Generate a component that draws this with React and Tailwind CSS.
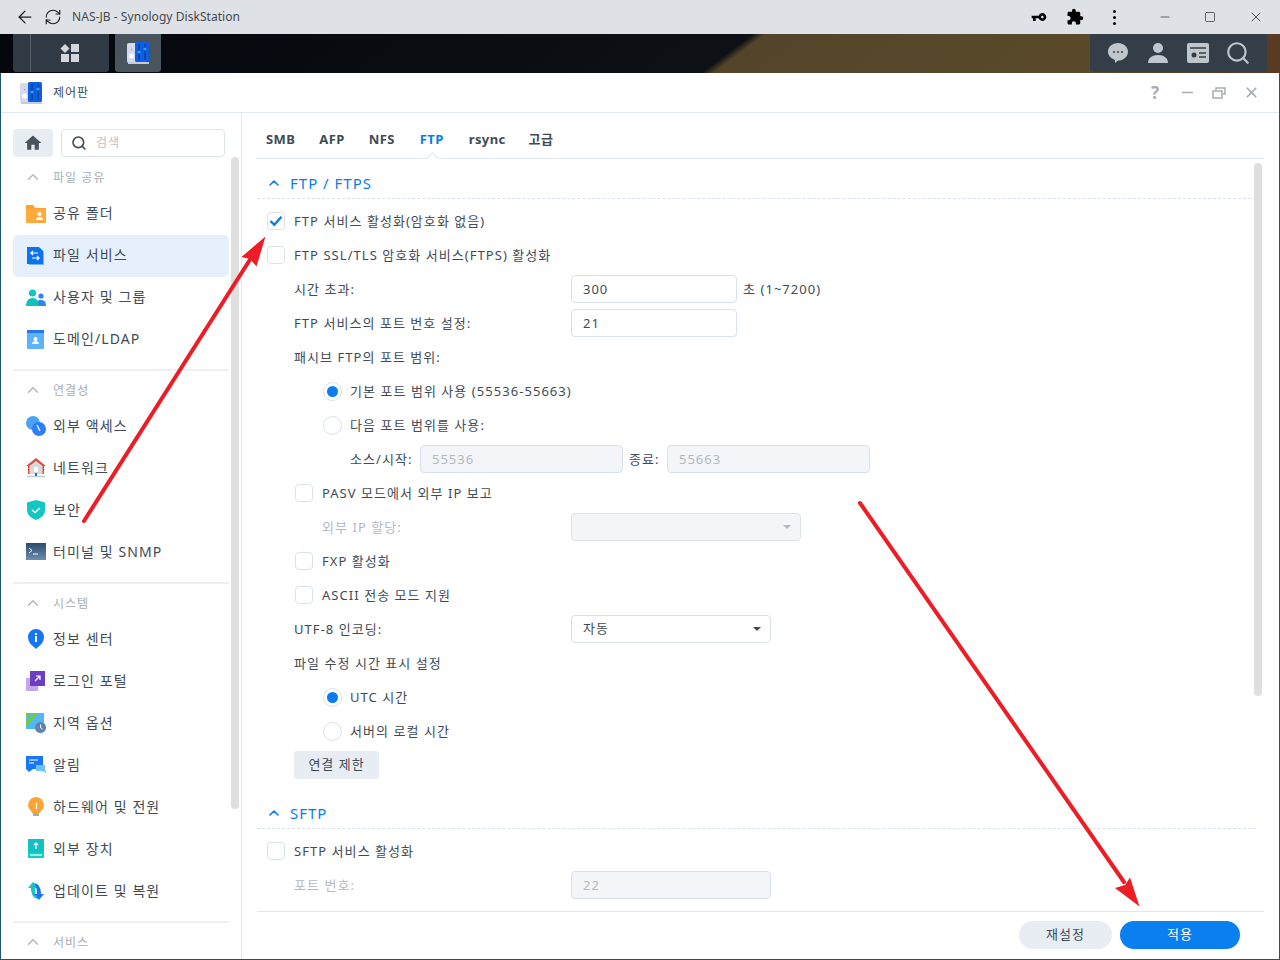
import { ArrowLeft, RefreshCw, ChevronUp, Search, Minus, Square, X } from "lucide-react";
import { MdVpnKey, MdExtension, MdHome } from "react-icons/md";

const font = { fontFamily: '"Noto Sans", "Noto Sans CJK KR", sans-serif' };

// --- small colored app icons ---
const ControlPanelIcon = ({ size = 24 }) => (
  <svg width={size} height={size} viewBox="0 0 24 24">
    <rect x="1" y="2" width="11" height="20" rx="2" fill="#d5d9ee" />
    <circle cx="5.5" cy="15" r="2.5" fill="#fff" />
    <rect x="5" y="8" width="1" height="1" fill="#8a93b8" />
    <rect x="9" y="1" width="14" height="20" rx="1.5" fill="#0b5fe0" />
    <path d="M13 3v16M19 3v16" stroke="#0b2f80" strokeWidth="1" />
    <circle cx="13" cy="11" r="1.6" fill="#3c9bff" />
    <circle cx="19" cy="8" r="1.6" fill="#3c9bff" />
    <rect x="2" y="21" width="21" height="2" fill="#c6cbdd" />
  </svg>
);

const icons = {
  folder: (
    <svg width="20" height="20" viewBox="0 0 20 20">
      <path d="M0 1h7l2 3h11v15H0z" fill="#ff9f2e" />
      <path d="M0 5h20v14H0z" fill="#ffab3d" />
      <circle cx="13.5" cy="10" r="2" fill="#fff" />
      <path d="M10 16c0-2 1.5-3 3.5-3s3.5 1 3.5 3z" fill="#fff" />
    </svg>
  ),
  file: (
    <svg width="20" height="20" viewBox="0 0 20 20">
      <path d="M3 2h11l4 4v13H3z" fill="#76b3fa" />
      <path d="M1 1h12l4 4v13H1z" fill="#0c72f0" />
      <path d="M12 7H5l2-2M5 7l2 2M6 12h7l-2-2M13 12l-2 2" stroke="#fff" strokeWidth="1.2" fill="none" />
    </svg>
  ),
  users: (
    <svg width="20" height="20" viewBox="0 0 20 20">
      <circle cx="6.5" cy="5" r="3.6" fill="#12c4c4" />
      <circle cx="15" cy="8" r="2.6" fill="#2f83f5" />
      <path d="M9 18c0-4 2.5-6 6-6s5 2 5 6z" fill="#2f83f5" />
      <path d="M0 18c0-5 2.5-8 6.5-8s6.5 3 6.5 8z" fill="#10c0bb" />
    </svg>
  ),
  domain: (
    <svg width="20" height="20" viewBox="0 0 20 20">
      <rect x="1" y="0" width="17" height="19" rx="1" fill="#5cb2fb" />
      <rect x="1" y="0" width="17" height="3" fill="#2477ee" />
      <circle cx="9.5" cy="9" r="2" fill="#fff" />
      <path d="M6 14c0-2 1.5-3 3.5-3s3.5 1 3.5 3z" fill="#fff" />
    </svg>
  ),
  external: (
    <svg width="20" height="20" viewBox="0 0 20 20">
      <circle cx="7" cy="7" r="7" fill="#4ba3f7" />
      <circle cx="13" cy="13" r="7" fill="#2d7ff5" />
      <path d="M11 9l3 6" stroke="#fff" strokeWidth="1.2" />
    </svg>
  ),
  network: (
    <svg width="20" height="20" viewBox="0 0 20 20">
      <path d="M10 0L0 8h2v8h16V8h2z" fill="#d94f4a" />
      <path d="M3.5 8L10 3l6.5 5v8h-13z" fill="#d9dadd" />
      <rect x="8" y="9" width="4" height="5" fill="#fff" />
      <path d="M1 18.500h18" stroke="#c0c8d4" strokeWidth="1.400" />
      <path d="M10 15v3" stroke="#1b6fe8" strokeWidth="2" />
    </svg>
  ),
  security: (
    <svg width="20" height="20" viewBox="0 0 20 20">
      <path d="M10 0l9 2.500V10c0 5-4 8-9 10-5-2-9-5-9-10V2.500z" fill="#10c7c3" />
      <path d="M6 10l3 2.500L14 8" stroke="#fff" strokeWidth="1.500" fill="none" />
    </svg>
  ),
  terminal: (
    <svg width="20" height="20" viewBox="0 0 20 20">
      <defs>
        <linearGradient id="term" x1="0" y1="0" x2="0" y2="1">
          <stop offset="0" stopColor="#2c4a6b" />
          <stop offset="1" stopColor="#6b8cb0" />
        </linearGradient>
      </defs>
      <rect x="0" y="1" width="20" height="17" fill="url(#term)" />
      <path d="M3 6l3 2.500L3 11M7 12h5" stroke="#fff" strokeWidth="1" fill="none" />
    </svg>
  ),
  info: (
    <svg width="20" height="20" viewBox="0 0 20 20">
      <path d="M10 20C7 17 2 14 2 8a8 8 0 0116 0c0 6-5 9-8 12z" fill="#1276f6" />
      <rect x="9" y="7" width="2" height="6" fill="#fff" />
      <rect x="9" y="4" width="2" height="2" fill="#fff" />
    </svg>
  ),
  login: (
    <svg width="20" height="20" viewBox="0 0 20 20">
      <rect x="0" y="7" width="12" height="13" fill="#c3a6ec" />
      <rect x="4" y="0" width="15" height="15" fill="#6d3ec4" />
      <path d="M9 10l5-5M10 5h4v4" stroke="#fff" strokeWidth="1.200" fill="none" />
    </svg>
  ),
  region: (
    <svg width="20" height="20" viewBox="0 0 20 20">
      <rect x="0" y="0" width="18" height="16" fill="#52b7f7" />
      <path d="M0 0h6L0 5zM0 8l9-8h3L0 14z" fill="#7ccb2e" />
      <circle cx="14.500" cy="14.500" r="5.500" fill="#5f83ad" />
      <path d="M14.500 11.500v3l2 1.500" stroke="#fff" strokeWidth="1" fill="none" />
    </svg>
  ),
  notify: (
    <svg width="20" height="20" viewBox="0 0 20 20">
      <path d="M0 1h17v13H7l-4 3-3-3z" fill="#1878f8" />
      <path d="M3 5h9M3 8h5" stroke="#fff" strokeWidth="1.200" />
      <path d="M10 10h9v6h1v2l-3-2h-7z" fill="#6ec0fb" />
    </svg>
  ),
  hardware: (
    <svg width="20" height="20" viewBox="0 0 20 20">
      <path d="M10 0a8 8 0 00-5 14l1 2h8l1-2a8 8 0 00-5-14z" fill="#fba333" />
      <rect x="7" y="16" width="6" height="3" fill="#a3abb5" />
      <path d="M9.500 7l1-.5V12" stroke="#fff" strokeWidth="1.200" fill="none" />
    </svg>
  ),
  device: (
    <svg width="20" height="20" viewBox="0 0 20 20">
      <rect x="2" y="0" width="16" height="13" fill="#14c0c4" />
      <rect x="2" y="13" width="16" height="6" fill="#0ecfc6" />
      <path d="M4 16h12" stroke="#fff" strokeWidth="1.200" />
      <path d="M10 10V4M8 6l2-2 2 2" stroke="#fff" strokeWidth="1.200" fill="none" />
    </svg>
  ),
  update: (
    <svg width="20" height="20" viewBox="0 0 20 20">
      <path d="M7 1L2 7h3c0 6 2 10 7 11-2-3-3-6-3-11h3z" fill="#14c4c9" />
      <path d="M13 19l5-6h-3c0-6-2-10-7-11 2 3 3 6 3 11H8z" fill="#1a78ee" />
    </svg>
  ),
};

// --- sidebar ---
const GroupTitle = ({ title }) => (
  <div className="flex h-[20px] items-center">
    <span className="flex w-[40px] justify-center">
      <ChevronUp className="h-[18px] w-[18px] text-[#b4b8bd]" strokeWidth={2} />
    </span>
    <span className="pt-[2px] text-[12px] leading-[18px] tracking-[1px] text-[#a8adb3]">{title}</span>
  </div>
);

const NavItem = ({ icon, label, active, lift }) => (
  <div className={`flex h-[42px] items-center rounded-[5px] pl-[13px] ${active ? "bg-[#e5f0fc]" : ""}`}>
    <span className="mr-[7px] flex h-[20px] w-[20px] items-center justify-center">{icons[icon]}</span>
    <span className={`text-[14px] leading-[18px] tracking-[1.100px] text-[#414b55] ${lift ? "pb-[2px]" : ""}`}>{label}</span>
  </div>
);

const Divider = () => <div className="h-[2px] bg-[#eef0f4]" />;

const Sidebar = () => (
  <aside className="relative flex w-[241px] shrink-0 flex-col overflow-hidden border-r border-[#e2e8ef] px-[12px] pt-[16px]">
    <div className="flex h-[28px] w-[212px] gap-[8px]">
      <div className="flex w-[40px] items-center justify-center rounded-[4px] bg-[#e8edf3]">
        <MdHome className="text-[20px] text-[#49535e]" />
      </div>
      <div className="flex w-[164px] items-center rounded-[4px] border border-[#dbe4ee] pl-[9px]">
        <Search className="h-[16px] w-[16px] text-[#414b55]" strokeWidth={2.400} />
        <span className="ml-[9px] text-[12px] leading-[18px] tracking-[1px] text-[#bcc1c7]">검색</span>
      </div>
    </div>
    <div className="mt-[10px] flex w-[216px] flex-col">
      <GroupTitle title="파일 공유" />
      <div className="mt-[6px]" />
      <NavItem icon="folder" label="공유 폴더" lift />
      <NavItem icon="file" label="파일 서비스" active lift />
      <NavItem icon="users" label="사용자 및 그룹" lift />
      <NavItem icon="domain" label="도메인/LDAP" lift />
      <div className="mt-[8px]" />
      <Divider />
      <div className="mt-[9px]" />
      <GroupTitle title="연결성" />
      <div className="mt-[5px]" />
      <NavItem icon="external" label="외부 액세스" />
      <NavItem icon="network" label="네트워크" />
      <NavItem icon="security" label="보안" />
      <NavItem icon="terminal" label="터미널 및 SNMP" />
      <div className="mt-[9px]" />
      <Divider />
      <div className="mt-[9px]" />
      <GroupTitle title="시스템" />
      <div className="mt-[5px]" />
      <NavItem icon="info" label="정보 센터" />
      <NavItem icon="login" label="로그인 포털" />
      <NavItem icon="region" label="지역 옵션" />
      <NavItem icon="notify" label="알림" />
      <NavItem icon="hardware" label="하드웨어 및 전원" />
      <NavItem icon="device" label="외부 장치" />
      <NavItem icon="update" label="업데이트 및 복원" />
      <div className="mt-[9px]" />
      <Divider />
      <div className="mt-[9px]" />
      <GroupTitle title="서비스" />
    </div>
    <div className="absolute left-[230px] top-[44px] h-[652px] w-[8px] rounded-[4px] bg-[#dfdfdf]" />
  </aside>
);

// --- form bits ---
const Check = ({ checked }) => (
  <span className="flex h-[18px] w-[18px] shrink-0 items-center justify-center rounded-[4px] border border-[#d9e2ec] bg-white">
    {checked && (
      <svg width="14" height="12" viewBox="0 0 14 12">
        <path d="M1.500 6l3.800 3.800L12.500 1.800" stroke="#0a7cf0" strokeWidth="2.400" fill="none" />
      </svg>
    )}
  </span>
);

const Radio = ({ checked }) => (
  <span className="flex h-[19px] w-[19px] shrink-0 items-center justify-center rounded-full border border-[#d9e2ec] bg-white">
    {checked && <span className="h-[11px] w-[11px] rounded-full bg-[#0a7cf0]" />}
  </span>
);

const Label = ({ children, muted }) => (
  <span className={`block whitespace-nowrap text-[13px] leading-[18px] tracking-[1.050px] ${muted ? "text-[#b4b9bf]" : "text-[#414b55]"}`}>{children}</span>
);

const Field = ({ value, disabled, width }) => (
  <div
    className={`flex h-[28px] items-center rounded-[4px] border border-[#d9e2ec] pl-[11px] pt-[1px] text-[13px] tracking-[1px] ${
      disabled ? "bg-[#f3f5f9] text-[#b4b9bf]" : "bg-white text-[#414b55]"
    }`}
    style={{ width }}
  >
    {value}
  </div>
);

const Dropdown = ({ value, disabled, width }) => (
  <div
    className={`flex h-[28px] items-center justify-between rounded-[4px] border border-[#d9e2ec] pl-[11px] pr-[9px] text-[13px] tracking-[1px] ${
      disabled ? "bg-[#f3f5f9]" : "bg-white text-[#414b55]"
    }`}
    style={{ width }}
  >
    <span>{value}</span>
    <span className={`h-0 w-0 border-x-[4px] border-t-[4px] border-x-transparent ${disabled ? "border-t-[#b4b9bf]" : "border-t-[#414b55]"}`} />
  </div>
);

const Row = ({ indent = 0, children }) => (
  <div className="flex h-[34px] items-center" style={{ paddingLeft: indent }}>
    {children}
  </div>
);

const CheckRow = ({ indent = 10, label, checked }) => (
  <Row indent={indent}>
    <Check checked={checked} />
    <span className="ml-[9px]">
      <Label>{label}</Label>
    </span>
  </Row>
);

const RadioRow = ({ label, checked }) => (
  <Row indent={66}>
    <Radio checked={checked} />
    <span className="ml-[8px]">
      <Label>{label}</Label>
    </span>
  </Row>
);

const FieldRow = ({ label, muted, children, labelWidth = 277, indent = 37 }) => (
  <Row indent={indent}>
    <span className="shrink-0" style={{ width: labelWidth }}>
      <Label muted={muted}>{label}</Label>
    </span>
    {children}
  </Row>
);

const SectionTitle = ({ title }) => (
  <div className="mr-[8px] flex h-[32px] items-center border-b border-dashed border-[#d9e2ec] pl-[9px]">
    <ChevronUp className="h-[16px] w-[16px] text-[#0a7cf0]" strokeWidth={2.400} />
    <span className="ml-[8px] text-[15px] leading-[18px] tracking-[1px] text-[#0a7cf0]">{title}</span>
  </div>
);

const Tabs = () => {
  const tabs = [
    { name: "SMB", gap: "mr-[24px]" },
    { name: "AFP", gap: "mr-[24px]" },
    { name: "NFS", gap: "mr-[25px]" },
    { name: "FTP", gap: "mr-[25px]" },
    { name: "rsync", gap: "mr-[23px]" },
    { name: "고급", gap: "" },
  ];
  return (
    <div className="relative flex h-[45px] items-center border-b border-[#dfe6ee] pl-[9px] pt-[5px]">
      {tabs.map((t) => (
        <span
          key={t.name}
          className={`text-[13px] font-bold leading-[18px] tracking-[0.4px] ${t.gap} ${t.name === "FTP" ? "text-[#0a7cf0]" : "text-[#414b55]"}`}
        >
          {t.name}
        </span>
      ))}
      <span className="absolute left-[171px] top-[40px] h-[9px] w-[9px] rotate-45 border-l border-t border-[#dfe6ee] bg-white" />
    </div>
  );
};

const FormPane = () => (
  <main className="relative flex min-w-0 flex-1 flex-col px-[15px] pt-[1px]">
    <div className="h-[797px] overflow-hidden">
      <Tabs />
      <div className="mt-[8px]" />
      <SectionTitle title="FTP / FTPS" />
      <div className="mt-[5px]" />
      <CheckRow label="FTP 서비스 활성화(암호화 없음)" checked />
      <CheckRow label="FTP SSL/TLS 암호화 서비스(FTPS) 활성화" />
      <FieldRow label="시간 초과:">
        <Field value="300" width={166} />
        <span className="ml-[6px]">
          <Label>초 (1~7200)</Label>
        </span>
      </FieldRow>
      <FieldRow label="FTP 서비스의 포트 번호 설정:">
        <Field value="21" width={166} />
      </FieldRow>
      <Row indent={37}>
        <Label>패시브 FTP의 포트 범위:</Label>
      </Row>
      <RadioRow label="기본 포트 범위 사용 (55536-55663)" checked />
      <RadioRow label="다음 포트 범위를 사용:" />
      <FieldRow label="소스/시작:" labelWidth={70} indent={93}>
        <Field value="55536" disabled width={203} />
        <span className="ml-[6px] w-[38px]">
          <Label>종료:</Label>
        </span>
        <Field value="55663" disabled width={203} />
      </FieldRow>
      <CheckRow indent={38} label="PASV 모드에서 외부 IP 보고" />
      <FieldRow label="외부 IP 할당:" muted labelWidth={249} indent={65}>
        <Dropdown disabled width={230} />
      </FieldRow>
      <CheckRow indent={38} label="FXP 활성화" />
      <CheckRow indent={38} label="ASCII 전송 모드 지원" />
      <FieldRow label="UTF-8 인코딩:">
        <Dropdown value="자동" width={200} />
      </FieldRow>
      <Row indent={37}>
        <Label>파일 수정 시간 표시 설정</Label>
      </Row>
      <RadioRow label="UTC 시간" checked />
      <RadioRow label="서버의 로컬 시간" />
      <Row indent={37}>
        <button className="flex h-[28px] w-[85px] items-center justify-center rounded-[3px] bg-[#e8edf3] text-[13px] tracking-[1px] text-[#414b55]">
          연결 제한
        </button>
      </Row>
      <div className="mt-[15px]" />
      <SectionTitle title="SFTP" />
      <div className="mt-[5px]" />
      <CheckRow label="SFTP 서비스 활성화" />
      <FieldRow label="포트 번호:" muted>
        <Field value="22" disabled width={200} />
      </FieldRow>
    </div>
    <div className="flex h-[48px] items-start justify-end gap-[8px] border-t border-[#e6e6e6] pr-[24px] pt-[9px]">
      <button className="flex h-[28px] w-[93px] items-center justify-center rounded-full bg-[#e8edf3] text-[13px] tracking-[1px] text-[#414b55]">
        재설정
      </button>
      <button className="flex h-[28px] w-[120px] items-center justify-center rounded-full bg-[#0a80f0] text-[13px] tracking-[1px] text-white">
        적용
      </button>
    </div>
    <div className="absolute left-[1012px] top-[50px] h-[533px] w-[8px] rounded-[4px] bg-[#dfdfdf]" />
  </main>
);

// --- chrome and DSM bars ---
const BrowserBar = () => (
  <div className="flex h-[34px] items-center bg-[#dee1e6] pl-[15px] text-[#1c1c1c]">
    <ArrowLeft className="h-[20px] w-[20px]" strokeWidth={1.500} />
    <RefreshCw className="ml-[9px] h-[18px] w-[18px]" strokeWidth={1.500} />
    <span className="ml-[10px] text-[12px] tracking-[0.05px] text-[#45494e]">NAS-JB - Synology DiskStation</span>
    <div className="ml-auto flex items-center">
      <MdVpnKey className="-scale-x-100 text-[16px] text-black" />
      <MdExtension className="ml-[19px] text-[18px] text-black" />
      <span className="ml-[29px] flex flex-col gap-[3px]">
        <i className="h-[3px] w-[3px] rounded-full bg-black" />
        <i className="h-[3px] w-[3px] rounded-full bg-black" />
        <i className="h-[3px] w-[3px] rounded-full bg-black" />
      </span>
      <Minus className="ml-[42px] h-[14px] w-[14px]" strokeWidth={1.100} />
      <Square className="ml-[32px] h-[12px] w-[12px]" strokeWidth={1.300} />
      <X className="ml-[32px] mr-[16px] h-[16px] w-[16px]" strokeWidth={1.100} />
    </div>
  </div>
);

const TaskBar = () => (
  <div className="flex h-[39px] bg-[linear-gradient(143deg,#03060c_0%,#0d1014_56.500%,#54452a_57.500%,#5a4a2b_85%,#5a3a22_96%)] pl-[13px]">
    <div className="flex h-[38px] w-[96px] rounded-b-[3px] bg-[#2f3a44]">
      <span className="w-[18px] border-r border-[#566069]" />
      <span className="flex flex-1 items-center justify-center">
        <svg width="20" height="19" viewBox="0 0 20 19">
          <path d="M5 0l4.500 4.500L5 9 .5 4.500z" fill="#d4d8dd" />
          <rect x="11" y="0" width="8" height="8" fill="#d4d8dd" />
          <rect x="1" y="10" width="8" height="8" fill="#d4d8dd" />
          <rect x="11" y="10" width="8" height="8" fill="#d4d8dd" />
        </svg>
      </span>
    </div>
    <div className="ml-[6px] flex h-[38px] w-[46px] items-center justify-center rounded-b-[3px] bg-[#4a545e]">
      <ControlPanelIcon />
    </div>
    <div className="ml-auto mr-[13px] flex h-[38px] w-[177px] items-center gap-[20px] rounded-b-[3px] bg-[#343e48] pl-[18px]">
      <svg width="20" height="20" viewBox="0 0 20 20">
        <path d="M10 0c5.500 0 10 3.800 10 8.800s-4.500 8.800-10 8.800l-3 2.400v-3C3 15.500 0 12.500 0 8.800 0 3.800 4.500 0 10 0z" fill="#c0c6cd" />
        <circle cx="6" cy="9" r="1" fill="#343e48" />
        <circle cx="10" cy="9" r="1" fill="#343e48" />
        <circle cx="14" cy="9" r="1" fill="#343e48" />
      </svg>
      <svg width="20" height="20" viewBox="0 0 20 20">
        <circle cx="10" cy="5" r="5" fill="#c0c6cd" />
        <path d="M0 20c0-5 4-8 10-8s10 3 10 8z" fill="#c0c6cd" />
      </svg>
      <svg width="22" height="20" viewBox="0 0 22 20" className="-ml-[1px]">
        <rect width="22" height="20" rx="2" fill="#c0c6cd" />
        <path d="M3 5h16" stroke="#343e48" strokeWidth="1.500" />
        <circle cx="7" cy="12" r="2.500" fill="#343e48" />
        <path d="M12 10h7M12 14h7" stroke="#343e48" strokeWidth="1.500" />
      </svg>
      <Search className="-ml-[4px] h-[26px] w-[26px] text-[#c0c6cd]" strokeWidth={2} />
    </div>
  </div>
);

const HeadBtn = ({ children }) => <span className="flex w-[32px] justify-center">{children}</span>;

const WindowHead = () => (
  <div className="flex h-[40px] shrink-0 items-center border-b border-[#e2e8ef] pl-[18px] pr-[12px]">
    <ControlPanelIcon />
    <span className="ml-[10px] text-[12px] leading-[18px] tracking-[1px] text-[#414b55]">제어판</span>
    <div className="ml-auto flex items-center text-[#a8adb3]">
      <HeadBtn>
        <span className="text-[17px] font-bold leading-none">?</span>
      </HeadBtn>
      <HeadBtn>
        <Minus className="h-[17px] w-[17px]" strokeWidth={2} />
      </HeadBtn>
      <HeadBtn>
        <svg width="14" height="12" viewBox="0 0 14 12" fill="none" stroke="currentColor" strokeWidth="1.500">
          <rect x="1" y="4" width="9" height="7" />
          <path d="M4 3V1h9v6h-2" />
        </svg>
      </HeadBtn>
      <HeadBtn>
        <X className="h-[17px] w-[17px]" strokeWidth={2.400} />
      </HeadBtn>
    </div>
  </div>
);

// red annotation arrows sit over the whole page
const Arrows = () => (
  <svg className="pointer-events-none absolute left-0 top-0" width="1280" height="960">
    <path d="M84 521L251 258" stroke="#ee1c25" strokeWidth="4" strokeLinecap="round" />
    <path d="M265.500 236.500L241.500 257 250 259 256.500 266.500z" fill="#ee1c25" />
    <path d="M860 503L1124 882" stroke="#ee1c25" strokeWidth="4" strokeLinecap="round" />
    <path d="M1139.500 906.500L1115 888 1125 885 1130 877.500z" fill="#ee1c25" />
  </svg>
);

export default function App() {
  return (
    <div className="relative flex h-[960px] w-[1280px] flex-col overflow-hidden bg-[#1d5570]" style={font}>
      <BrowserBar />
      <TaskBar />
      <div className="mx-[1px] mb-[1px] flex min-h-0 flex-1 flex-col bg-white">
        <WindowHead />
        <div className="flex min-h-0 flex-1">
          <Sidebar />
          <FormPane />
        </div>
      </div>
      <Arrows />
    </div>
  );
}
